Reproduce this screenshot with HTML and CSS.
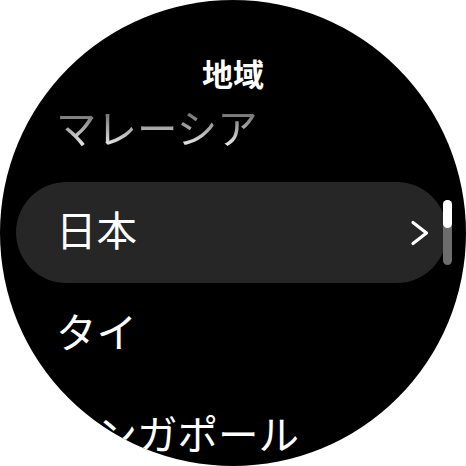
FILE: index.html
```html
<!DOCTYPE html>
<html lang="ja">
<head>
<meta charset="utf-8">
<link rel="stylesheet" href="styles.css">
</head>
<body>
<div class="watch">
  <div class="title">地域</div>
  <div class="list">
    <div class="row"><span class="label fade">マレーシア</span></div>
    <div class="row chip">
      <span class="label">日本</span>
      <svg class="chev" width="20" height="26" viewBox="0 0 20 26"><path d="M3 2.5 L16.5 13 L3 23.5" fill="none" stroke="#fff" stroke-width="3.2" stroke-linecap="round" stroke-linejoin="round"/></svg>
    </div>
    <div class="row"><span class="label">タイ</span></div>
    <div class="row"><span class="label">シンガポール</span></div>
  </div>
  <div class="scrollbar"><div class="thumb"></div></div>
</div>
</body>
</html>
```
FILE: styles.css
```css
html, body {
  margin: 0;
  padding: 0;
  background: #fff;
}
.watch {
  position: relative;
  width: 466px;
  height: 466px;
  border-radius: 50%;
  overflow: hidden;
  background: #000;
  font-family: "Noto Sans CJK JP", "Noto Sans", sans-serif;
  color: #fff;
}
.title {
  padding-top: 56px;
  line-height: 34px;
  height: 34px;
  text-align: center;
  font-size: 31px;
  font-weight: 700;
}
.list {
  margin-top: -10px;
  display: flex;
  flex-direction: column;
  gap: 1px;
}
.row {
  height: 101px;
  flex: none;
  display: flex;
  align-items: center;
  padding-left: 42px;
  margin: 0 19px 0 16px;
  white-space: nowrap;
}
.label {
  font-size: 40.5px;
  line-height: 1;
  margin-left: -2px;
  margin-top: -6px;
}
.fade {
  background: linear-gradient(to bottom, #6a6a6a 10%, #e8e8e8 95%);
  -webkit-background-clip: text;
  background-clip: text;
  color: transparent;
}
.chip {
  background: #262626;
  border-radius: 51px;
  justify-content: space-between;
  padding-right: 17px;
}
.chev {
  display: block;
}
.scrollbar {
  position: absolute;
  left: 443px;
  top: 200px;
  width: 9px;
  height: 65px;
  border-radius: 5px;
  background: #6d6d6d;
}
.thumb {
  height: 28px;
  border-radius: 5px;
  background: #fff;
}
```
